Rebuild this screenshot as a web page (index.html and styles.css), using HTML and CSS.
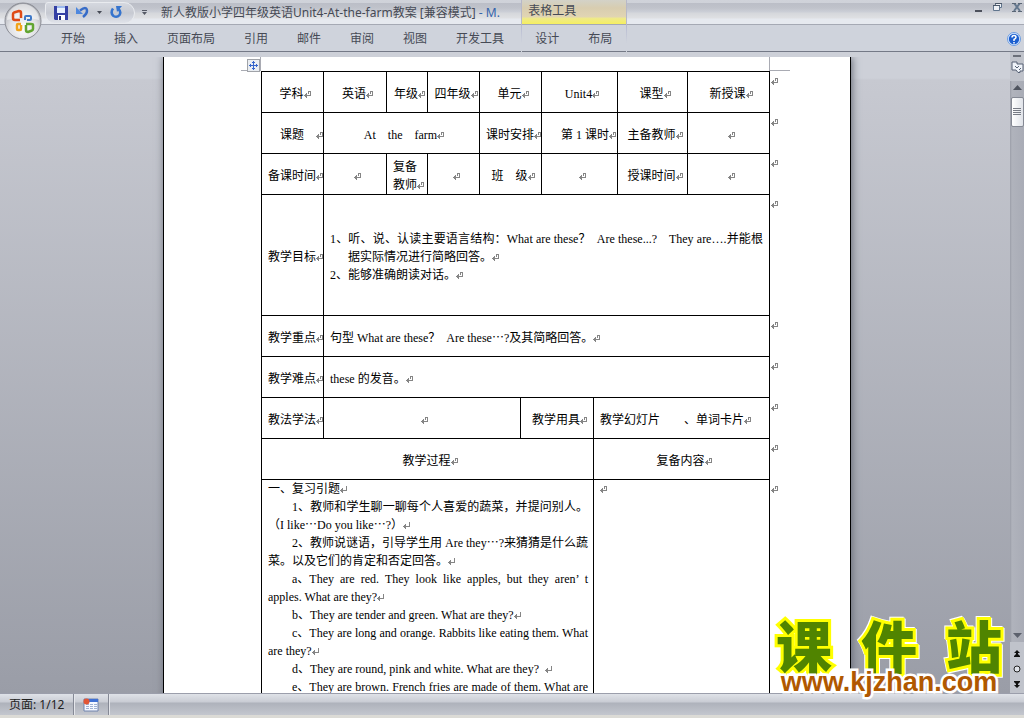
FILE: index.html
```html
<!DOCTYPE html>
<html lang="zh-CN">
<head>
<meta charset="utf-8">
<title>新人教版小学四年级英语Unit4-At-the-farm教案</title>
<link rel="stylesheet" href="styles.css">
</head>
<body>
<svg class="defs" aria-hidden="true">
  <symbol id="ret" viewBox="0 0 8 7"><path d="M4 0h3v5H3v2H2V6H1V5H0V4h1V3h1V2h1v2h3V1H5v2H4z" fill="#858585"/></symbol>
  <symbol id="ret2" viewBox="0 0 8 7"><path d="M6 0h1v5H3v2H2V6H1V5H0V4h1V3h1V2h1v2h3z" fill="#858585"/></symbol>
</svg>

<header class="ribbon">
  <button class="orb" aria-label="Office 按钮">
    <svg viewBox="0 0 38 38" width="38" height="38">
      <defs>
        <radialGradient id="orb" cx=".5" cy=".7" r=".7"><stop offset="0" stop-color="#fff"/><stop offset=".55" stop-color="#dedfe3"/><stop offset="1" stop-color="#a4a6ad"/></radialGradient>
      </defs>
      <circle cx="19" cy="19" r="18" fill="url(#orb)" stroke="#8b8d95"/>
      <path d="M3 18a16 16 0 0 1 32 0q-16-5-32 0z" fill="#fff" opacity=".55"/>
      <g fill="none" stroke-linejoin="round">
        <path d="M16 18h-5q-2 0-2-2v-4q0-1 1-1.500l5-1.500q2 0 2 2v5" stroke="#df4a16" stroke-width="2.500"/>
        <path d="M21 18v-3q0-1 1-1h4q1 0 1 1v2q0 1-1 1h-3" stroke="#3f78c7" stroke-width="2"/>
        <path d="M17 22h-3q-1 0-1 1v4q0 1 1 1h2q1 0 1-1v-4" stroke="#f0a31b" stroke-width="2.500"/>
        <path d="M22 22h5q2 0 2 1v4q0 1-1 1.500l-4 1.500q-2 0-2-2v-5" stroke="#62a532" stroke-width="2.500"/>
      </g>
    </svg>
  </button>
  <div class="titlebar">
    <div class="quick">
      <button aria-label="保存"><svg width="14" height="14" viewBox="0 0 14 14"><path d="M0 0h14v14H1l-1-1z" fill="#3540a4"/><path d="M3 0h8v7H3z" fill="#e8f1ff"/><path d="M3 0h8v2H3z" fill="#9db9ed"/><path d="M4 9h7v5H4z" fill="#fff"/><path d="M5 10h2v4H5z" fill="#273079"/></svg></button>
      <button aria-label="撤消"><svg width="13" height="13" viewBox="0 0 13 13"><path d="M4 4.500Q11-.5 11 5q0 3-4 6" fill="none" stroke="#376cc8" stroke-width="2.500"/><path d="M0 1v7h7z" fill="#4d87df"/></svg></button>
      <button aria-label="撤消选项"><svg width="5" height="3" viewBox="0 0 5 3"><path d="M0 0h5L2.500 3z" fill="#464a55"/></svg></button>
      <button aria-label="重复"><svg width="13" height="13" viewBox="0 0 13 13"><path d="M3 2.500Q0 7 3.500 10q3.500 2 6-1 2-3-1-6" fill="none" stroke="#3674ce" stroke-width="2.500"/><path d="M6 0h6L7 6z" fill="#3674ce"/></svg></button>
    </div>
    <button class="more" aria-label="自定义快速访问工具栏"><svg width="5" height="5" viewBox="0 0 5 5"><path d="M0 0h5v1H0zM0 2h5L2.500 5z" fill="#555965"/></svg></button>
    <h1 class="title">新人教版小学四年级英语Unit4-At-the-farm教案 [兼容模式] <span>- M.</span></h1>
  </div>
  <nav class="tabs">
    <button>开始</button><button>插入</button><button>页面布局</button><button>引用</button><button>邮件</button><button>审阅</button><button>视图</button><button>开发工具</button>
  </nav>
  <div class="context-title">表格工具</div>
  <nav class="context-tabs"><button>设计</button><button>布局</button></nav>
  <div class="window">
    <button aria-label="最小化"><svg width="8" height="10" viewBox="0 0 8 10"><path d="M0 7h7v2H0z" fill="#4d515c"/></svg></button>
    <button aria-label="还原"><svg width="9" height="8" viewBox="0 0 9 8"><path d="M2.500 2V.5h6v4H7M.5 2.500h6v5h-6z" fill="#eef1f6" stroke="#60758d"/><path d="M0 2h7v1H0zM2 0h7v1H2z" fill="#4d5969"/></svg></button>
    <button aria-label="关闭"><svg width="10" height="9" viewBox="0 0 10 9"><path d="M2 0l6 8M8 0L2 8" stroke="#64788e" stroke-width="2"/><path d="M0 .5h4M6 .5h4M0 8.500h4M6 8.500h4" stroke="#5a6675"/></svg></button>
  </div>
  <div class="help">
    <button aria-label="帮助"><svg width="14" height="14" viewBox="0 0 14 14"><circle cx="7" cy="7" r="6.500" fill="#dceaff" stroke="#6d9de0"/><circle cx="7" cy="7" r="5.200" fill="#1c5fcf"/><path d="M5 5.500Q5 3.500 7 3.500t2 1.800Q9 6.500 7 7.500V9M7 10v1.500" fill="none" stroke="#fff" stroke-width="1.500"/></svg></button>
  </div>
</header>

<main class="work">
  <div class="desk">
    <article class="page">
      <div class="corners"><span></span><button class="move" aria-label="移动表格"><svg width="11" height="11" viewBox="0 0 11 11"><path d="M5.500 1v9M1 5.500h9M4 2.500h3M4 8.500h3M2.500 4v3M8.500 4v3" stroke="#3565cb" fill="none"/></svg></button><i></i><b></b></div>
      <table>
        <colgroup><col class="c62"><col class="c63"><col class="c41"><col class="c52"><col class="c41"><col class="c21"><col class="c52"><col class="c24"><col class="c70"><col class="c82"><col class="c20"></colgroup>
        <tr><td>学科<svg class="m"><use href="#ret"/></svg></td><td>英语<svg class="m"><use href="#ret"/></svg></td><td>年级<svg class="m"><use href="#ret"/></svg></td><td>四年级<svg class="m"><use href="#ret"/></svg></td><td colspan="2">单元<svg class="m"><use href="#ret"/></svg></td><td colspan="2">Unit4<svg class="m"><use href="#ret"/></svg></td><td>课型<svg class="m"><use href="#ret"/></svg></td><td>新授课<svg class="m"><use href="#ret"/></svg></td><td class="end"><svg class="m"><use href="#ret"/></svg></td></tr>
        <tr><td class="label inset">课题&emsp;<svg class="m"><use href="#ret"/></svg></td><td colspan="3">At&emsp;the&emsp;farm<svg class="m"><use href="#ret"/></svg></td><td colspan="2" class="label">课时安排<svg class="m"><use href="#ret"/></svg></td><td colspan="2" class="right">第 1 课时<svg class="m"><use href="#ret"/></svg></td><td>主备教师<svg class="m"><use href="#ret"/></svg></td><td><svg class="m"><use href="#ret"/></svg></td><td class="end"><svg class="m"><use href="#ret"/></svg></td></tr>
        <tr><td class="label">备课时间<svg class="m"><use href="#ret"/></svg></td><td><svg class="m"><use href="#ret"/></svg></td><td class="label">复备<br>教师<svg class="m"><use href="#ret"/></svg></td><td><svg class="m"><use href="#ret"/></svg></td><td colspan="2">班&emsp;级<svg class="m"><use href="#ret"/></svg></td><td colspan="2"><svg class="m"><use href="#ret"/></svg></td><td>授课时间<svg class="m"><use href="#ret"/></svg></td><td><svg class="m"><use href="#ret"/></svg></td><td class="end"><svg class="m"><use href="#ret"/></svg></td></tr>
        <tr class="tall"><td class="label">教学目标<svg class="m"><use href="#ret"/></svg></td><td colspan="9" class="text">
          <p class="full">1、听、说、认读主要语言结构：What are these？&ensp;Are these...?&emsp;They are….并能根</p>
          <p class="hang">据实际情况进行简略回答。<svg class="m"><use href="#ret"/></svg></p>
          <p>2、能够准确朗读对话。<svg class="m"><use href="#ret"/></svg></p></td><td class="end"><svg class="m"><use href="#ret"/></svg></td></tr>
        <tr><td class="label">教学重点<svg class="m"><use href="#ret"/></svg></td><td colspan="9" class="text">句型 What are these？&ensp;Are these<span class="cjk">…</span>?及其简略回答。<svg class="m"><use href="#ret"/></svg></td><td class="end"><svg class="m"><use href="#ret"/></svg></td></tr>
        <tr><td class="label">教学难点<svg class="m"><use href="#ret"/></svg></td><td colspan="9" class="text">these 的发音。<svg class="m"><use href="#ret"/></svg></td><td class="end"><svg class="m"><use href="#ret"/></svg></td></tr>
        <tr><td class="label">教法学法<svg class="m"><use href="#ret"/></svg></td><td colspan="4"><svg class="m"><use href="#ret"/></svg></td><td colspan="2">教学用具<svg class="m"><use href="#ret"/></svg></td><td colspan="3" class="text">教学幻灯片&emsp;&emsp;、单词卡片<svg class="m"><use href="#ret"/></svg></td><td class="end"><svg class="m"><use href="#ret"/></svg></td></tr>
        <tr><td colspan="7">教学过程<svg class="m"><use href="#ret"/></svg></td><td colspan="3">复备内容<svg class="m"><use href="#ret"/></svg></td><td class="end"><svg class="m"><use href="#ret"/></svg></td></tr>
        <tr class="body"><td colspan="7" class="text">
          <p>一、复习引题<svg class="m"><use href="#ret2"/></svg></p>
          <p class="in full">1、教师和学生聊一聊每个人喜爱的蔬菜，并提问别人。</p>
          <p>（I like<span class="cjk">…</span>Do you like<span class="cjk">…</span>?）<svg class="m"><use href="#ret2"/></svg></p>
          <p class="in full">2、教师说谜语，引导学生用 Are they<span class="cjk">…</span>?来猜猜是什么蔬</p>
          <p>菜。以及它们的肯定和否定回答。<svg class="m"><use href="#ret2"/></svg></p>
          <p class="in full"><span class="item">a、</span>They are red. They look like apples, but they aren’ t</p>
          <p>apples. What are they?<svg class="m"><use href="#ret2"/></svg></p>
          <p class="in">b、They are tender and green. What are they?<svg class="m"><use href="#ret2"/></svg></p>
          <p class="in full"><span class="item">c、</span>They are long and orange. Rabbits like eating them. What</p>
          <p>are they?<svg class="m"><use href="#ret2"/></svg></p>
          <p class="in">d、They are round, pink and white. What are they?&ensp;<svg class="m"><use href="#ret2"/></svg></p>
          <p class="in full"><span class="item">e、</span>They are brown. French fries are made of them. What are</p>
        </td><td colspan="3" class="text"><p><svg class="m"><use href="#ret"/></svg></p></td><td class="end"><svg class="m"><use href="#ret"/></svg></td></tr>
      </table>
    </article>
  </div>
  <div class="scroll">
    <button class="split" aria-label="拆分"></button>
    <button aria-label="标尺"><svg width="13" height="12" viewBox="0 0 13 12"><path d="M1 1h5v2h6v7H9v1.500H7L5 9H1z" fill="#eef2f8" stroke="#566174"/><path d="M4 5l2 2 2-2M8 9l2-2" stroke="#566174" fill="none"/></svg></button>
    <div class="track">
      <button aria-label="向上"><svg width="9" height="5" viewBox="0 0 9 5"><path d="M0 5L4.500 0 9 5z" fill="#4f545f"/></svg></button>
      <div class="thumb"><svg width="8" height="8" viewBox="0 0 8 8"><path d="M0 .5h8M0 2.500h8M0 4.500h8M0 6.500h8" stroke="#777b85"/></svg></div>
      <button class="down" aria-label="向下"><svg width="9" height="5" viewBox="0 0 9 5"><path d="M0 0h9L4.500 5z" fill="#5c616d"/></svg></button>
    </div>
    <button aria-label="上一页"><svg width="6" height="7" viewBox="0 0 6 7"><path d="M0 3l3-3 3 3H4v1l2 2v1H0V6l2-2V3z" fill="#111"/></svg></button>
    <button aria-label="选择浏览对象"><svg width="8" height="8" viewBox="0 0 8 8"><circle cx="4" cy="4" r="3" fill="#dfe2e8" stroke="#222"/></svg></button>
    <button aria-label="下一页"><svg width="6" height="7" viewBox="0 0 6 7"><path d="M0 0h6v1L4 3v1h2L3 7 0 4h2V3L0 1z" fill="#111"/></svg></button>
  </div>
</main>

<footer class="status">
  <button>页面: 1/12</button>
  <button aria-label="宏"><svg width="16" height="14" viewBox="0 0 16 14"><path d="M1 1h14v12H1z" fill="#f5f8ff" stroke="#7084ad"/><path d="M1 1h14v3H1z" fill="#3f70d3"/><path d="M3 6.500h3m1 0h3m1 0h3M3 8.500h3m1 0h3m1 0h3M3 10.500h3m1 0h3m1 0h3" stroke="#9eb0d2"/><circle cx="3.500" cy="3.500" r="3" fill="#e25635"/></svg></button>
</footer>

<div class="mark">
  <div class="name"><span>课</span><span>件</span><span>站</span></div>
  <div class="site">www.kjzhan.com</div>
</div>
</body>
</html>
```
FILE: styles.css
```css
* { box-sizing: border-box; }
body {
  margin: 0;
  height: 100vh;
  display: flex;
  flex-direction: column;
  overflow: hidden;
  position: relative;
  background: #cdd0d8;
  font: 12px/18px "Noto Sans", "Noto Sans CJK SC", sans-serif;
  color: #464a55;
}
button { border: 0; padding: 0; background: none; font: inherit; color: inherit; }
svg { display: block; }
p { margin: 0; }
.defs { position: absolute; width: 0; height: 0; }

.ribbon {
  display: grid;
  grid-template-columns: 45px auto auto 1fr;
  grid-template-rows: 25px 27px;
  flex: none;
  position: relative;
  background: linear-gradient(#d0d3da 0, #cfd2d9 3px, #bbbec7 3px, #c0c3cb 8px, #cccfd7 12px, #d5d7db 13px, #dfe0e3 18px, #e6e9ef 19px, #e6e9ef 24px, #a5a9b4 24px, #a5a9b4 25px, #cfd3dc 25px, #cfd3dc 100%);
  box-shadow: inset 0 -1px #747986;
}
.orb { position: absolute; left: 4px; top: 2px; }
.titlebar { grid-column: 2; grid-row: 1; display: flex; align-items: center; }
.quick {
  display: flex;
  align-items: center;
  gap: 8px;
  width: 90px;
  height: 22px;
  padding-left: 8px;
  background: linear-gradient(#d5d8df, #c7cad2 50%, #e0e3ea);
  border: 1px solid #e9ebef;
  border-radius: 3px 11px 11px 10px;
}
.more { margin: 0 14px 0 7px; }
.title { margin: 0; font-size: 12px; font-weight: 400; white-space: nowrap; }
.title span { color: #3464ab; }
.tabs { grid-column: 2; grid-row: 2; display: flex; align-items: center; gap: 29px; padding: 0 17px 0 16px; }
.context-title {
  grid-column: 3;
  grid-row: 1;
  padding: 2px 6px;
  background: linear-gradient(#d3d2c8, #d8cdb0 8px, #e1d5b3 17px, #eee98d 18px, #f5ef60 24px, #a5a9b4 24px);
  border: solid #b7b8c8;
  border-width: 0 1px;
}
.context-tabs {
  grid-column: 3;
  grid-row: 2;
  display: flex;
  align-items: center;
  gap: 29px;
  padding: 0 14px 0 13px;
  border: solid;
  border-width: 0 1px;
  border-image: linear-gradient(#b4b8d0, #cfd3dc 18px) 1;
}
.window { grid-column: 4; grid-row: 1; display: flex; justify-content: flex-end; align-items: flex-start; gap: 10px; padding: 3px 2px; }
.help { grid-column: 4; grid-row: 2; display: flex; justify-content: flex-end; align-items: center; padding-right: 3px; }

.work { flex: 1; min-height: 0; display: flex; background: linear-gradient(#cdd0d8 0, #cdd0d8 26px, #c7c9d1 28px, #9a9da7 100%); }
.desk { flex: 1; min-width: 0; overflow: hidden; display: flex; justify-content: center; padding: 5px 0 0 4px; }
.page {
  width: 100%;
  max-width: 688px;
  height: 700px;
  background: #fff;
  border: 1px solid #000;
  border-top: 0;
  box-shadow: 1px 0 8px #646873;
  padding: 0 60px 0 97px;
  color: #000;
  font-family: "Liberation Serif", "Noto Sans CJK SC", serif;
  clip-path: inset(0 -12px);
}
.corners { display: flex; height: 14px; margin-left: -20px; position: relative; }
.corners span { width: 20px; border: solid #a9abb3; border-width: 0 1px 1px 0; }
.corners i { width: 509px; border-right: 1px solid #a9abb3; }
.corners b { width: 20px; border-bottom: 1px solid #a9abb3; }
.move { position: absolute; left: 6px; top: 2px; background: #e9edf2; border: 1px solid #a0a3a8; }
table { border-collapse: collapse; table-layout: fixed; width: 528px; }
.c20 { width: 20px; } .c21 { width: 21px; } .c24 { width: 24px; } .c41 { width: 41px; }
.c52 { width: 52px; } .c62 { width: 62px; } .c63 { width: 63px; } .c70 { width: 70px; } .c82 { width: 82px; }
tr { height: 41px; }
td { border: 1px solid #000; padding: 3px 0 0 6px; text-align: center; white-space: nowrap; line-height: 18px; }
td.label { text-align: left; overflow: hidden; }
td.inset { padding-left: 18px; }
td.right { text-align: right; }
td.text { text-align: left; padding: 3px 6px 0; }
td.end { border: 0; vertical-align: top; text-align: left; padding: 0 0 0 1px; }
.tall { height: 121px; }
.body td.text { vertical-align: top; padding: 0 5px 0 6px; }
.m { display: inline-block; width: 8px; height: 7px; }
.cjk { font-family: "Noto Sans CJK SC", sans-serif; line-height: 12px; }
.item { display: inline-block; text-align-last: left; }
.full { text-align: justify; text-align-last: justify; }
.hang { padding-left: 18px; }
.in { padding-left: 24px; }

.scroll { width: 14px; display: flex; flex-direction: column; align-items: center; gap: 8px; padding: 3px 0 5px; background: #c0c3cb; }
.split { width: 8px; height: 2px; background: #6b6f79; margin-bottom: -4px; }
.track { flex: 1; width: 14px; display: flex; flex-direction: column; align-items: center; gap: 7px; padding: 4px 0; background: linear-gradient(90deg, #9b9ea8, #b0b3bc 2px, #a9acb6); }
.thumb { width: 13px; height: 30px; display: grid; place-items: center; background: linear-gradient(90deg, #fff, #e0e3e9); border: 1px solid #858994; border-radius: 2px; }
.down { margin-top: auto; }

.status { flex: none; height: 25px; display: flex; background: linear-gradient(#dfe2e8, #c9ccd4 8px, #aeb2bb 9px, #c5c8d0 22px); border-top: 1px solid #9b9eab; border-bottom: 3px solid #dcdbd6; color: #222; }
.status button { padding: 0 9px; border-right: 1px solid #858995; box-shadow: 1px 0 #e4e6eb; }

.mark { position: absolute; right: 22px; bottom: 22px; width: 226px; }
.name {
  display: flex;
  justify-content: space-between;
  font: 900 56px/48px "Noto Sans CJK SC", sans-serif;
  color: #508400;
  -webkit-text-stroke: 6px #ff0;
  paint-order: stroke;
  filter: drop-shadow(1px 1px #fff) drop-shadow(-1px -1px #fff);
}
.site { font: bold 27px/28px "Liberation Sans", sans-serif; color: #b05800; -webkit-text-stroke: 5px #fff; paint-order: stroke; text-align: center; position: relative; }
```
